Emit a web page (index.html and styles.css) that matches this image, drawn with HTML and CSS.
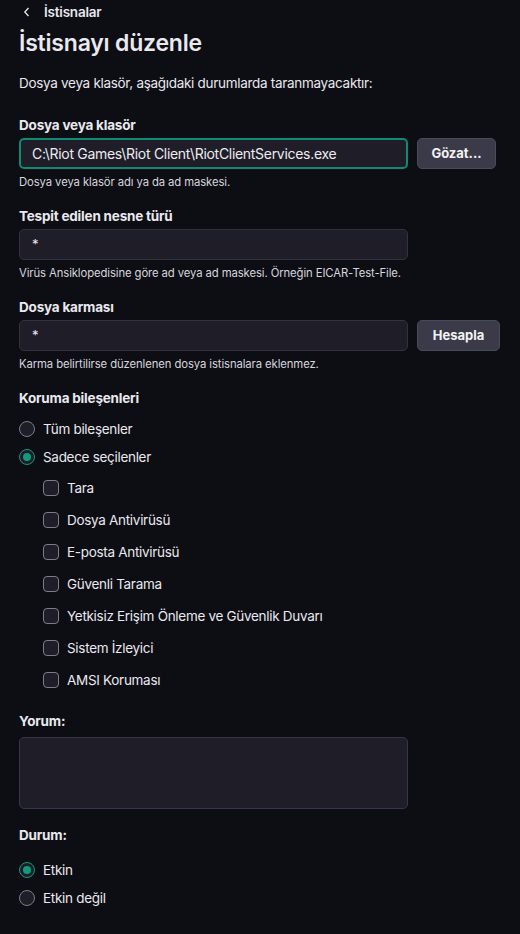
FILE: index.html
```html
<!DOCTYPE html>
<html lang="tr">
<head>
<meta charset="utf-8">
<title>İstisnayı düzenle</title>
<link rel="stylesheet" href="styles.css">
</head>
<body>
<div class="page">
  <div class="back">
    <svg class="chev" width="8" height="10" viewBox="0 0 8 10"><path d="M5.5 1 L1.8 5 L5.5 9" fill="none" stroke="#e6e6ea" stroke-width="1.3"/></svg>
    <span>İstisnalar</span>
  </div>
  <h1 class="title">İstisnayı düzenle</h1>
  <p class="desc">Dosya veya klasör, aşağıdaki durumlarda taranmayacaktır:</p>

  <div class="field f1">
    <div class="label">Dosya veya klasör</div>
    <div class="row">
      <div class="input focus">C:\Riot Games\Riot Client\RiotClientServices.exe</div>
      <div class="btn">Gözat...</div>
    </div>
    <div class="help">Dosya veya klasör adı ya da ad maskesi.</div>
  </div>

  <div class="field">
    <div class="label">Tespit edilen nesne türü</div>
    <div class="row">
      <div class="input star">*</div>
    </div>
    <div class="help">Virüs Ansiklopedisine göre ad veya ad maskesi. Örneğin EICAR-Test-File.</div>
  </div>

  <div class="field">
    <div class="label">Dosya karması</div>
    <div class="row">
      <div class="input star">*</div>
      <div class="btn wide">Hesapla</div>
    </div>
    <div class="help">Karma belirtilirse düzenlenen dosya istisnalara eklenmez.</div>
  </div>

  <div class="group">
    <div class="label">Koruma bileşenleri</div>
    <div class="radios">
      <div class="radio"><span class="rb"></span>Tüm bileşenler</div>
      <div class="radio"><span class="rb on"></span>Sadece seçilenler</div>
    </div>
    <div class="checks">
      <div class="check"><span class="cb"></span>Tara</div>
      <div class="check"><span class="cb"></span>Dosya Antivirüsü</div>
      <div class="check"><span class="cb"></span>E-posta Antivirüsü</div>
      <div class="check"><span class="cb"></span>Güvenli Tarama</div>
      <div class="check"><span class="cb"></span>Yetkisiz Erişim Önleme ve Güvenlik Duvarı</div>
      <div class="check"><span class="cb"></span>Sistem İzleyici</div>
      <div class="check"><span class="cb"></span>AMSI Koruması</div>
    </div>
  </div>

  <div class="comment">
    <div class="label">Yorum:</div>
    <div class="textarea"></div>
  </div>

  <div class="status">
    <div class="label">Durum:</div>
    <div class="radios">
      <div class="radio"><span class="rb on"></span>Etkin</div>
      <div class="radio"><span class="rb"></span>Etkin değil</div>
    </div>
  </div>
</div>
</body>
</html>
```
FILE: styles.css
```css
html, body {
  margin: 0;
  padding: 0;
  background: #0d0d14;
}
body {
  font-family: Inter, "Noto Sans", "Liberation Sans", sans-serif;
  color: #e9e9ee;
  width: 520px;
  height: 934px;
  overflow: hidden;
}
.page {
  padding: 0 19px;
}
.back {
  display: flex;
  align-items: center;
  gap: 13px;
  height: 24px;
  padding-left: 4px;
  font-size: 13.5px;
  font-weight: 600;
  letter-spacing: -0.2px;
}
.title {
  margin: 4px 0 0;
  font-size: 23px;
  font-weight: 600;
  line-height: 30px;
  letter-spacing: -0.2px;
}
.desc {
  margin: 15px 0 0;
  font-size: 13.5px;
  line-height: 20px;
  letter-spacing: -0.3px;
}
.field {
  margin-top: 18px;
}
.field.f1 {
  margin-top: 23px;
}
.label {
  font-size: 13.5px;
  font-weight: 700;
  line-height: 18px;
  letter-spacing: -0.2px;
}
.row {
  display: flex;
  gap: 9px;
  margin-top: 4px;
}
.input {
  box-sizing: border-box;
  width: 389px;
  height: 31px;
  background: #1e1d28;
  border: 1px solid #33323f;
  border-radius: 5px;
  font-size: 14px;
  line-height: 29px;
  padding-left: 12px;
  letter-spacing: -0.3px;
  color: #ececf0;
}
.input.focus {
  border: 2px solid #108a72;
  line-height: 27px;
  height: 31px;
  padding-left: 11px;
}
.input.star {
  font-size: 13px;
}
.btn {
  box-sizing: border-box;
  width: 79px;
  height: 31px;
  background: #3a3a48;
  border: 1px solid #4a4a58;
  border-radius: 5px;
  font-size: 13px;
  font-weight: 700;
  text-align: center;
  line-height: 29px;
  color: #f2f2f5;
}
.btn.wide {
  width: 83px;
}
.help {
  margin-top: 6px;
  font-size: 11.3px;
  line-height: 14px;
  color: #d6d6dc;
  letter-spacing: -0.1px;
}
.group {
  margin-top: 18px;
}
.radios {
  display: flex;
  flex-direction: column;
  gap: 8px;
  margin-top: 12px;
}
.radio {
  display: flex;
  align-items: center;
  gap: 8px;
  height: 20px;
  font-size: 13.5px;
  letter-spacing: -0.3px;
}
.rb {
  box-sizing: border-box;
  width: 16px;
  height: 16px;
  border-radius: 50%;
  border: 1.5px solid #7d7c88;
  background: #1e1d28;
  position: relative;
}
.rb.on {
  border-color: #129a7f;
  background: #1e1d28;
}
.rb.on::after {
  content: "";
  position: absolute;
  left: 2.5px;
  top: 2.5px;
  width: 8px;
  height: 8px;
  border-radius: 50%;
  background: #129a7f;
}
.checks {
  display: flex;
  flex-direction: column;
  gap: 12px;
  margin-top: 11px;
  padding-left: 24px;
}
.check {
  display: flex;
  align-items: center;
  gap: 8px;
  height: 20px;
  font-size: 13.5px;
  letter-spacing: -0.3px;
}
.cb {
  box-sizing: border-box;
  width: 16px;
  height: 16px;
  border-radius: 4px;
  border: 1.5px solid #7d7c88;
  background: #1e1d28;
}
.comment {
  margin-top: 22px;
}
.textarea {
  box-sizing: border-box;
  width: 389px;
  height: 72px;
  margin-top: 7px;
  background: #1e1d28;
  border: 1px solid #36354a;
  border-radius: 5px;
}
.status {
  margin-top: 17px;
}
.status .radios {
  margin-top: 16px;
}
```
